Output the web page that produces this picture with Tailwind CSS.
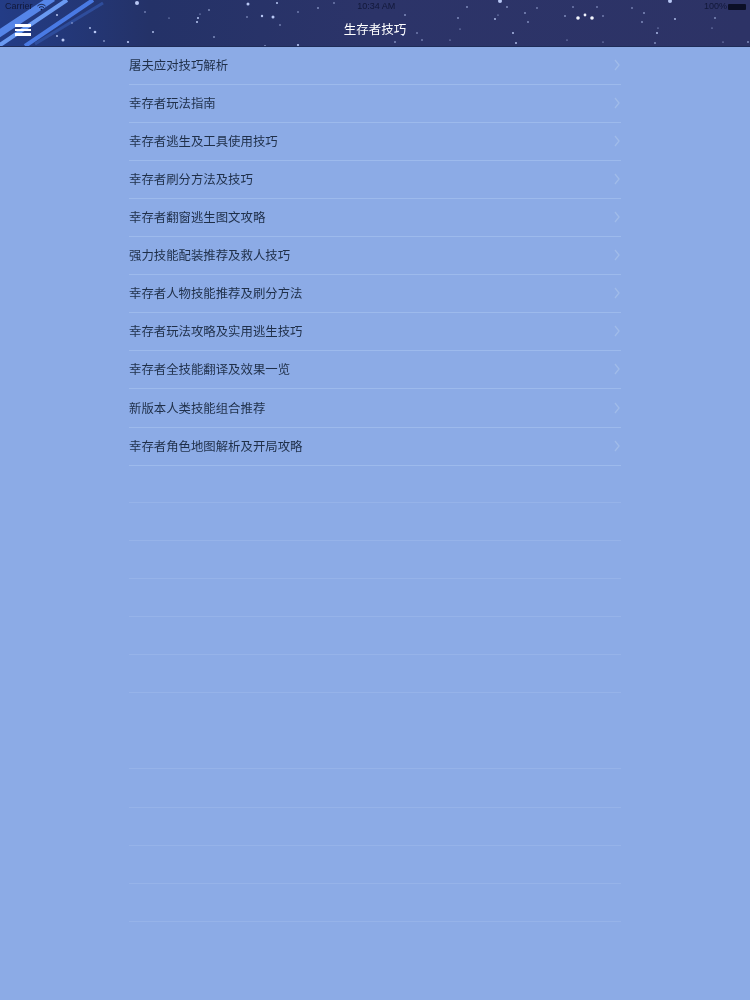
<!doctype html>
<html lang="zh">
<head>
    <meta charset="UTF-8" />
    <title>生存者技巧</title>
    <script src="https://cdn.jsdelivr.net/npm/@tailwindcss/browser@4"></script>
</head>
<body class="bg-[#8cabe6] font-['Liberation_Sans','Noto_Sans_CJK_SC',sans-serif] w-[750px] h-[1000px] overflow-hidden">
    <!-- Header -->
    <header class="relative h-[47px] bg-[#27305f] overflow-hidden">
        <svg class="absolute inset-0" width="750" height="47" viewBox="0 0 750 47">
            <defs>
                <linearGradient id="sky" x1="0" x2="1" y1="0" y2="0">
                    <stop offset="0" stop-color="#233c86" />
                    <stop offset="0.2" stop-color="#243268" />
                    <stop offset="0.5" stop-color="#2c3469" />
                    <stop offset="1" stop-color="#2d3366" />
                </linearGradient>
                <filter id="soft"><feGaussianBlur stdDeviation="0.7" /></filter>
                <filter id="glow"><feGaussianBlur stdDeviation="0.6" /></filter>
            </defs>
            <rect width="750" height="47" fill="url(#sky)" />
            <g fill="none" filter="url(#soft)">
                <path d="M-3 35 L53 -2" stroke="#5585e8" stroke-width="7" />
                <path d="M-3 47 L67 0" stroke="#6a9af2" stroke-width="4" />
                <path d="M25 46 L93 0" stroke="#4a7ae4" stroke-width="4" />
                <path d="M35 44 L103 3" stroke="#2f4d9c" stroke-width="3" />
            </g>
            <g fill="#b9c8f5" filter="url(#glow)">
                <circle cx="57" cy="15" r="1" /><circle cx="95" cy="32" r="1.3" /><circle cx="90" cy="28" r="0.9" />
                <circle cx="63" cy="40" r="1.5" /><circle cx="57" cy="36" r="0.9" /><circle cx="72" cy="23" r="0.7" />
                <circle cx="104" cy="41" r="0.8" /><circle cx="128" cy="42" r="1.1" /><circle cx="137" cy="3" r="2" />
                <circle cx="145" cy="12" r="0.7" /><circle cx="169" cy="18" r="0.6" /><circle cx="153" cy="32" r="0.9" />
                <circle cx="197" cy="22" r="1" /><circle cx="198" cy="18" r="1" /><circle cx="209" cy="10" r="0.8" />
                <circle cx="200" cy="14" r="0.6" /><circle cx="214" cy="37" r="0.8" /><circle cx="248" cy="4" r="1.5" />
                <circle cx="262" cy="16" r="1.2" /><circle cx="273" cy="17" r="1.5" /><circle cx="247" cy="17" r="0.7" />
                <circle cx="277" cy="3" r="1" /><circle cx="298" cy="45" r="1.1" /><circle cx="265" cy="46" r="0.8" />
                <circle cx="318" cy="8" r="0.8" /><circle cx="280" cy="25" r="0.7" /><circle cx="298" cy="12" r="0.7" />
                <circle cx="334" cy="3" r="0.7" /><circle cx="405" cy="15" r="0.8" /><circle cx="417" cy="33" r="0.7" />
                <circle cx="422" cy="40" r="0.7" /><circle cx="395" cy="42" r="0.8" /><circle cx="403" cy="35" r="1" />
                <circle cx="500" cy="1" r="2" /><circle cx="670" cy="1" r="2" /><circle cx="467" cy="7" r="0.8" />
                <circle cx="507" cy="7" r="0.8" /><circle cx="537" cy="8" r="0.7" /><circle cx="573" cy="7" r="0.7" />
                <circle cx="597" cy="7" r="0.7" /><circle cx="458" cy="18" r="0.8" /><circle cx="495" cy="19" r="0.9" />
                <circle cx="525" cy="13" r="0.8" /><circle cx="528" cy="22" r="0.8" /><circle cx="498" cy="15" r="0.6" />
                <circle cx="565" cy="16" r="0.8" /><circle cx="603" cy="16" r="0.7" /><circle cx="632" cy="8" r="0.7" />
                <circle cx="644" cy="13" r="0.8" /><circle cx="642" cy="22" r="0.8" /><circle cx="675" cy="19" r="0.9" />
                <circle cx="715" cy="18" r="0.8" /><circle cx="657" cy="33" r="0.9" /><circle cx="658" cy="28" r="0.6" />
                <circle cx="513" cy="33" r="0.9" /><circle cx="516" cy="43" r="0.9" /><circle cx="460" cy="29" r="0.6" />
                <circle cx="712" cy="28" r="0.6" /><circle cx="655" cy="43" r="0.8" /><circle cx="603" cy="42" r="0.6" />
                <circle cx="567" cy="40" r="0.6" /><circle cx="723" cy="42" r="0.6" /><circle cx="748" cy="42" r="0.8" />
                <circle cx="450" cy="40" r="0.6" />
            </g>
            <g fill="#f4f7ff" filter="url(#glow)">
                <circle cx="578" cy="18" r="1.8" /><circle cx="585" cy="15" r="1.4" /><circle cx="592" cy="18" r="1.8" />
            </g>
            <rect y="46" width="750" height="1" fill="#1f2c58" />
        </svg>

        <!-- Status bar -->
        <div class="relative flex justify-between items-center h-[14px] pl-[5px] pr-[4px] text-[9px] text-[#12183a] blur-[0.4px]">
            <div class="flex items-center gap-[3px]">
                <span>Carrier</span>
                <svg width="11" height="8" viewBox="0 0 10 8" fill="none" stroke="#12183a">
                    <path d="M1 3 C3.5 .8 6.5 .8 9 3 M2.6 4.6 C4 3.4 6 3.4 7.4 4.6" />
                    <path d="M5 7.5 L3.8 6 C4.5 5.5 5.5 5.5 6.2 6 Z" fill="#12183a" stroke="none" />
                </svg>
            </div>
            <span class="ml-[2px]">10:34 AM</span>
            <div class="flex items-center gap-[1px]">
                <span>100%</span>
                <span class="w-[18px] h-[6px] bg-[#0b0f26] rounded-[1px]"></span>
            </div>
        </div>

        <!-- Nav bar -->
        <div class="relative flex items-center justify-center h-[33px]">
            <div class="absolute left-[15px] top-[10px] flex flex-col gap-[2px] blur-[0.3px]">
                <span class="w-[16px] h-[2.5px] bg-white"></span>
                <span class="w-[16px] h-[2.5px] bg-white"></span>
                <span class="w-[16px] h-[2.5px] bg-white"></span>
            </div>
            <h1 class="text-[12.5px] text-white blur-[0.3px]">生存者技巧</h1>
        </div>
    </header>

    <!-- List -->
    <ul class="w-[492px] ml-[129px] text-[12.4px] text-[#1f2f49]">
        <li class="flex justify-between items-center h-[38px] border-b border-[#9dbaec]"><span class="pt-[2px] blur-[0.3px]">屠夫应对技巧解析</span><svg class="mr-[1px] mb-[1px]" width="6" height="12" viewBox="0 0 6 12" fill="none" stroke="#a0bbe9" stroke-width="1.3"><path d="M1 1 L5 6 L1 11" /></svg></li>
        <li class="flex justify-between items-center h-[38px] border-b border-[#9dbaec]"><span class="pt-[2px] blur-[0.3px]">幸存者玩法指南</span><svg class="mr-[1px] mb-[1px]" width="6" height="12" viewBox="0 0 6 12" fill="none" stroke="#a0bbe9" stroke-width="1.3"><path d="M1 1 L5 6 L1 11" /></svg></li>
        <li class="flex justify-between items-center h-[38px] border-b border-[#9dbaec]"><span class="pt-[2px] blur-[0.3px]">幸存者逃生及工具使用技巧</span><svg class="mr-[1px] mb-[1px]" width="6" height="12" viewBox="0 0 6 12" fill="none" stroke="#a0bbe9" stroke-width="1.3"><path d="M1 1 L5 6 L1 11" /></svg></li>
        <li class="flex justify-between items-center h-[38px] border-b border-[#9dbaec]"><span class="pt-[2px] blur-[0.3px]">幸存者刷分方法及技巧</span><svg class="mr-[1px] mb-[1px]" width="6" height="12" viewBox="0 0 6 12" fill="none" stroke="#a0bbe9" stroke-width="1.3"><path d="M1 1 L5 6 L1 11" /></svg></li>
        <li class="flex justify-between items-center h-[38px] border-b border-[#9dbaec]"><span class="pt-[2px] blur-[0.3px]">幸存者翻窗逃生图文攻略</span><svg class="mr-[1px] mb-[1px]" width="6" height="12" viewBox="0 0 6 12" fill="none" stroke="#a0bbe9" stroke-width="1.3"><path d="M1 1 L5 6 L1 11" /></svg></li>
        <li class="flex justify-between items-center h-[38px] border-b border-[#9dbaec]"><span class="pt-[2px] blur-[0.3px]">强力技能配装推荐及救人技巧</span><svg class="mr-[1px] mb-[1px]" width="6" height="12" viewBox="0 0 6 12" fill="none" stroke="#a0bbe9" stroke-width="1.3"><path d="M1 1 L5 6 L1 11" /></svg></li>
        <li class="flex justify-between items-center h-[38px] border-b border-[#9dbaec]"><span class="pt-[2px] blur-[0.3px]">幸存者人物技能推荐及刷分方法</span><svg class="mr-[1px] mb-[1px]" width="6" height="12" viewBox="0 0 6 12" fill="none" stroke="#a0bbe9" stroke-width="1.3"><path d="M1 1 L5 6 L1 11" /></svg></li>
        <li class="flex justify-between items-center h-[38px] border-b border-[#9dbaec]"><span class="pt-[2px] blur-[0.3px]">幸存者玩法攻略及实用逃生技巧</span><svg class="mr-[1px] mb-[1px]" width="6" height="12" viewBox="0 0 6 12" fill="none" stroke="#a0bbe9" stroke-width="1.3"><path d="M1 1 L5 6 L1 11" /></svg></li>
        <li class="flex justify-between items-center h-[38px] border-b border-[#9dbaec]"><span class="pt-[2px] blur-[0.3px]">幸存者全技能翻译及效果一览</span><svg class="mr-[1px] mb-[1px]" width="6" height="12" viewBox="0 0 6 12" fill="none" stroke="#a0bbe9" stroke-width="1.3"><path d="M1 1 L5 6 L1 11" /></svg></li>
        <li class="flex justify-between items-center h-[39px] border-b border-[#9dbaec]"><span class="pt-[2px] blur-[0.3px]">新版本人类技能组合推荐</span><svg class="mr-[1px] mb-[1px]" width="6" height="12" viewBox="0 0 6 12" fill="none" stroke="#a0bbe9" stroke-width="1.3"><path d="M1 1 L5 6 L1 11" /></svg></li>
        <li class="flex justify-between items-center h-[38px] border-b border-[#9dbaec]"><span class="pt-[2px] blur-[0.3px]">幸存者角色地图解析及开局攻略</span><svg class="mr-[1px] mb-[1px]" width="6" height="12" viewBox="0 0 6 12" fill="none" stroke="#a0bbe9" stroke-width="1.3"><path d="M1 1 L5 6 L1 11" /></svg></li>
        <!-- empty rows -->
        <li class="h-[37px] border-b border-[#96b3e9]"></li>
        <li class="h-[38px] border-b border-[#96b3e9]"></li>
        <li class="h-[38px] border-b border-[#96b3e9]"></li>
        <li class="h-[38px] border-b border-[#96b3e9]"></li>
        <li class="h-[38px] border-b border-[#96b3e9]"></li>
        <li class="h-[38px] border-b border-[#96b3e9]"></li>
        <li class="h-[76px] border-b border-[#96b3e9]"></li>
        <li class="h-[39px] border-b border-[#96b3e9]"></li>
        <li class="h-[38px] border-b border-[#96b3e9]"></li>
        <li class="h-[38px] border-b border-[#96b3e9]"></li>
        <li class="h-[38px] border-b border-[#96b3e9]"></li>
    </ul>
</body>
</html>
